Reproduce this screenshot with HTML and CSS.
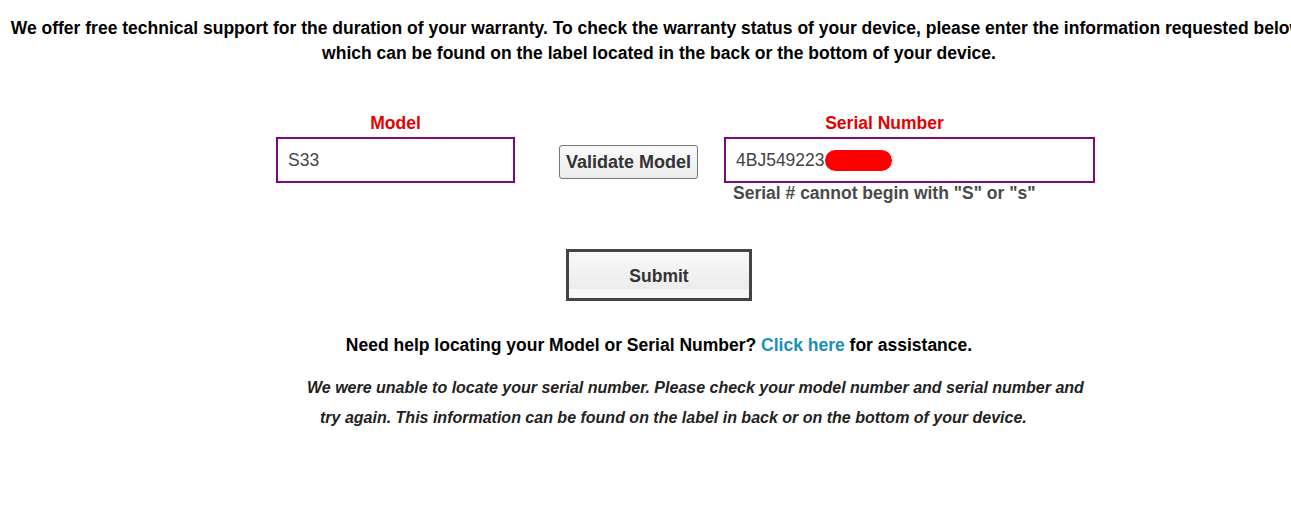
FILE: index.html
```html
<!DOCTYPE html>
<html>
<head>
<meta charset="utf-8">
<link rel="stylesheet" href="styles.css">
</head>
<body>
<div class="page">
  <p class="intro">We offer free technical support for the duration of your warranty. To check the warranty status of your device, please enter the information requested below, which can be found on the label located in the back or the bottom of your device.</p>

  <div class="form-row">
    <div class="field model-field">
      <div class="label">Model</div>
      <div class="box">S33</div>
    </div>
    <div class="validate-col">
      <button class="validate">Validate Model</button>
    </div>
    <div class="field serial-field">
      <div class="label serial-label">Serial Number</div>
      <div class="box">4BJ549223<span class="redact"></span></div>
      <div class="hint">Serial # cannot begin with "S" or "s"</div>
    </div>
  </div>

  <div class="submit-row">
    <button class="submit">Submit</button>
  </div>

  <p class="help">Need help locating your Model or Serial Number? <a class="link" href="#">Click here</a> for assistance.</p>

  <div class="error">
    <div class="err-line1">We were unable to locate your serial number. Please check your model number and serial number and</div>
    <div class="err-line2">try again. This information can be found on the label in back or on the bottom of your device.</div>
  </div>
</div>
</body>
</html>
```

FILE: styles.css
```css
html, body {
  margin: 0;
  padding: 0;
  background: #fff;
  overflow: hidden;
}
body {
  font-family: "Liberation Sans", Arial, sans-serif;
  color: #000;
}
.page {
  width: 1318px;
}
.intro {
  margin: 16px 0 0 0;
  font-size: 17.5px;
  font-weight: bold;
  line-height: 25px;
  text-align: center;
}
.form-row {
  display: flex;
  align-items: flex-start;
  margin-top: 47px;
  padding-left: 276px;
}
.field {
  display: flex;
  flex-direction: column;
}
.model-field { width: 239px; }
.serial-field { width: 371px; }
.label {
  color: #e60000;
  font-size: 17.5px;
  font-weight: bold;
  line-height: 20px;
  text-align: center;
  margin-bottom: 4px;
}
.serial-label {
  padding-right: 50px;
}
.box {
  box-sizing: border-box;
  height: 46px;
  border: 2px solid #7b0a7b;
  padding: 0 10px;
  font-size: 17.5px;
  line-height: 40px;
  color: #444;
  display: flex;
  align-items: center;
}
.redact {
  display: inline-block;
  width: 67px;
  height: 21px;
  background: #ff0000;
  border-radius: 11px;
}
.validate-col {
  padding-top: 32px;
  margin-left: 44px;
  margin-right: 26px;
}
.validate {
  box-sizing: border-box;
  width: 139px;
  height: 34px;
  border: 1px solid #777;
  border-radius: 3px;
  background: linear-gradient(#fafafa, #ebebeb);
  font-family: "Liberation Sans", Arial, sans-serif;
  font-size: 18px;
  font-weight: bold;
  color: #333;
  padding: 0;
}
.hint {
  margin-top: 1px;
  padding-left: 9px;
  font-size: 17.5px;
  font-weight: bold;
  line-height: 18px;
  color: #4a4a4a;
}
.submit-row {
  display: flex;
  justify-content: center;
  margin-top: 47px;
}
.submit {
  box-sizing: border-box;
  width: 186px;
  height: 52px;
  border: 3px solid #444;
  background: linear-gradient(#f9f9f9 0%, #ececec 80%, #f7f7f7 81%, #f7f7f7 100%);
  font-family: "Liberation Sans", Arial, sans-serif;
  font-size: 17.5px;
  font-weight: bold;
  color: #333;
  padding: 2px 0 0 0;
}
.help {
  margin: 34px 0 0 0;
  text-align: center;
  font-size: 17.5px;
  font-weight: bold;
  line-height: 20px;
}
.link {
  color: #1a8fb8;
  text-decoration: none;
}
.error {
  margin-top: 18px;
  font-size: 16px;
  font-weight: bold;
  font-style: italic;
  color: #222;
  line-height: 30px;
}
.err-line1 { padding-left: 307px; }
.err-line2 { padding-left: 320px; }
```
